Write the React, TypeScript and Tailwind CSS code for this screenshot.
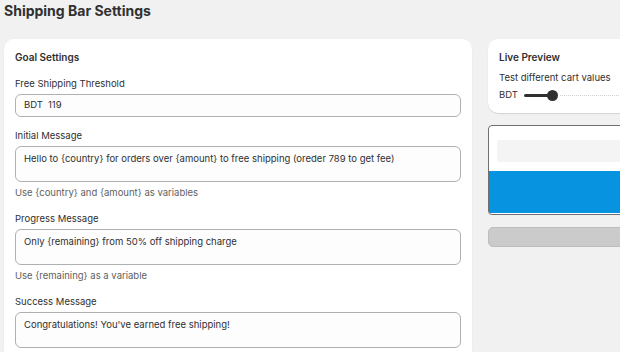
import React, { useState } from 'react';

const font = { fontFamily: 'Inter, "Noto Sans", sans-serif' };

const Field = ({ label, value, help, multi }: { label: string; value: string; help?: string; multi?: boolean }) => (
  <div className="flex flex-col">
    <label className="text-[9.5px] leading-[14px] text-[#303030] mb-[3px]">{label}</label>
    {multi ? (
      <textarea
        readOnly
        value={value}
        rows={2}
        className="h-[36px] resize-none rounded-[6px] border border-[#b0b0b0] bg-[#fdfdfd] px-[8px] pt-[5px] text-[9.5px] leading-[14px] text-[#303030] outline-none"
      />
    ) : (
      <div className="flex h-[23px] items-center rounded-[6px] border border-[#b0b0b0] bg-[#fdfdfd] px-[8px] text-[9.5px] text-[#303030]">
        <span>BDT</span>
        <input readOnly value={value} className="ml-[5px] w-full bg-transparent outline-none" />
      </div>
    )}
    {help && <p className="mt-[4px] text-[9.5px] leading-[14px] text-[#616161]">{help}</p>}
  </div>
);

const App = () => {
  const [cart] = useState(35);

  return (
    <div className="h-[352px] w-[620px] overflow-hidden bg-[#f1f1f1] px-[4px]" style={font}>
      <h1 className="pt-[2px] text-[14px] font-bold leading-[18px] text-[#303030]">Shipping Bar Settings</h1>

      <div className="mt-[19px] flex gap-[16px]">
        <div className="w-[468px] shrink-0 rounded-[10px] bg-white px-[11px] pt-[11px] pb-[12px] shadow-[0_1px_1px_rgba(0,0,0,0.12)]">
          <h2 className="text-[10px] font-semibold leading-[14px] text-[#303030]">Goal Settings</h2>
          <div className="mt-[13px] flex flex-col gap-[12px]">
            <Field label="Free Shipping Threshold" value="119" />
            <Field
              multi
              label="Initial Message"
              value="Hello to {country} for orders over {amount} to free shipping (oreder 789 to get fee)"
              help="Use {country} and {amount} as variables"
            />
            <Field
              multi
              label="Progress Message"
              value="Only {remaining} from 50% off shipping charge"
              help="Use {remaining} as a variable"
            />
            <Field multi label="Success Message" value="Congratulations! You've earned free shipping!" />
          </div>
        </div>

        <div className="flex w-[300px] shrink-0 flex-col">
          <div className="h-[74px] rounded-[10px] bg-white px-[11px] pt-[11px] shadow-[0_1px_1px_rgba(0,0,0,0.12)]">
            <h2 className="text-[10px] font-semibold leading-[14px] text-[#303030]">Live Preview</h2>
            <p className="mt-[7px] text-[9.5px] leading-[14px] text-[#303030]">Test different cart values</p>
            <div className="mt-[3px] flex items-center text-[9.5px] leading-[14px] text-[#303030]">
              <span>BDT</span>
              <div className="relative ml-[6px] flex h-[12px] flex-1 items-center">
                <div className="h-[3px] rounded-full bg-[#303030]" style={{ width: cart - 10 }} />
                <div className="h-[11px] w-[11px] -ml-[2px] rounded-full bg-[#303030]" />
                <div className="ml-[2px] h-0 flex-1 border-t border-dotted border-[#d0d0d0]" />
              </div>
            </div>
          </div>

          <div className="mt-[12px] h-[90px] overflow-hidden rounded-[4px] border border-[#6f6f6f] bg-white">
            <div className="px-[8px] pt-[14px] pb-[9px]">
              <div className="h-[22px] rounded-[3px] bg-[#f4f4f4]" />
            </div>
            <div className="h-[42px] bg-[#0793e0]" />
          </div>

          <div className="mt-[12px] h-[20px] rounded-[5px] border border-[#bdbdbd] bg-[#cbcbcb]" />
        </div>
      </div>
    </div>
  );
};

export default App;
